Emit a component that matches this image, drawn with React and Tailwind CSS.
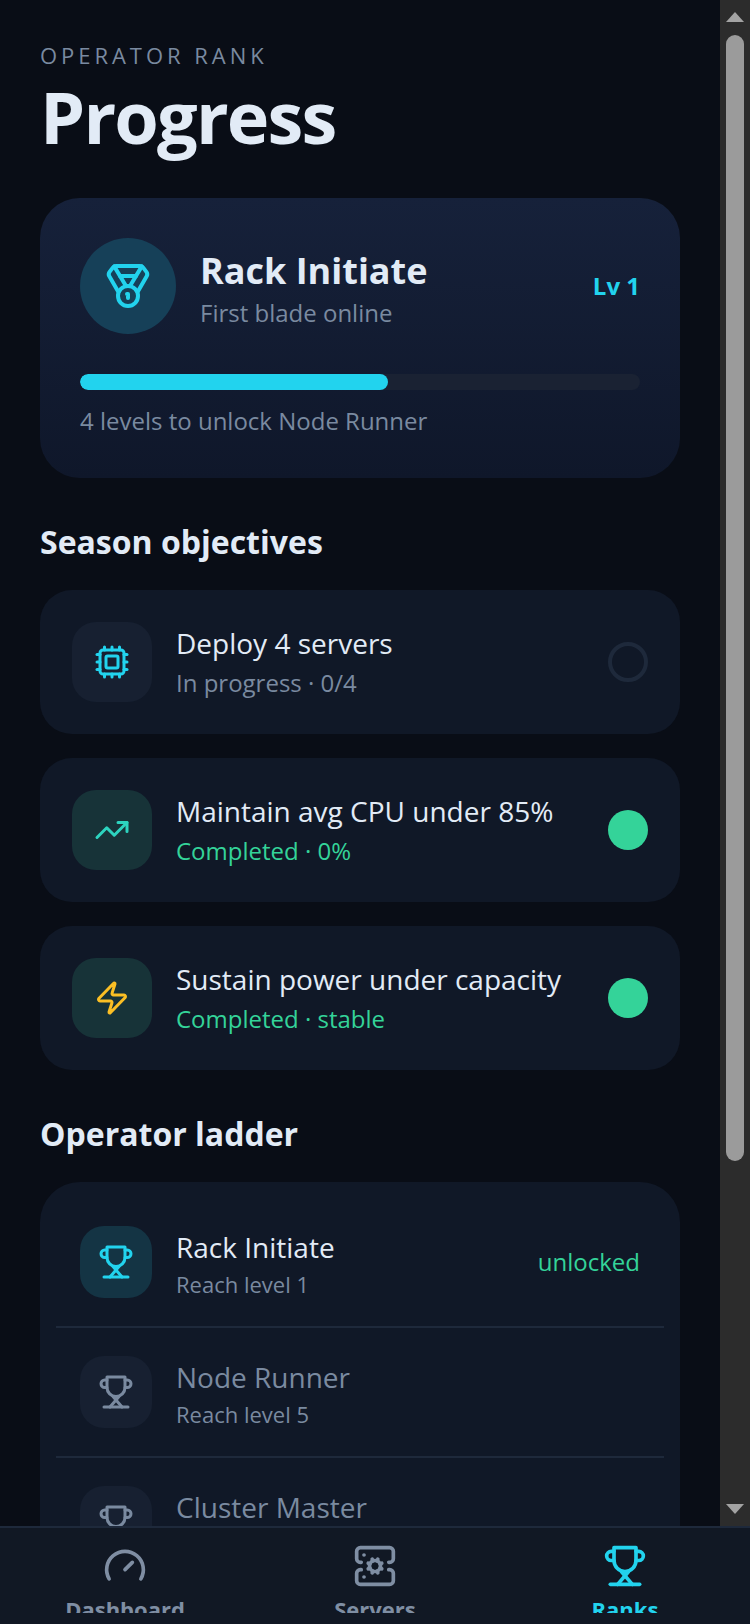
import React from "react";
import { Medal, Cpu, TrendingUp, Zap, Gauge, ServerCog } from "lucide-react";

function Trophy({ className }) {
  return (
    <svg viewBox="0 0 24 24" fill="none" stroke="currentColor" strokeWidth="2" strokeLinecap="round" strokeLinejoin="round" className={className}>
      <path d="M6 9H4.5a2.5 2.5 0 0 1 0-5H6" />
      <path d="M18 9h1.5a2.5 2.5 0 0 0 0-5H18" />
      <path d="M18 2H6v7a6 6 0 0 0 12 0V2Z" />
      <path d="M4 22h16" />
      <path d="M10 15l6 7" />
      <path d="M14 15l-6 7" />
    </svg>
  );
}

function Objective({ icon: Icon, iconColor, done, title, sub }) {
  return (
    <div className="flex h-[144px] items-center rounded-[32px] bg-[#101827] px-8">
      <div className={`flex h-[80px] w-[80px] shrink-0 items-center justify-center rounded-[24px] ${done ? "bg-[#173338]" : "bg-[#172031]"}`}>
        <Icon className={`h-[36px] w-[36px] ${iconColor}`} strokeWidth={2} />
      </div>
      <div className="ml-6 min-w-0 flex-1">
        <div className="text-[28px] leading-[40px] text-[#e2ebf6]">{title}</div>
        <div className={`mt-[2px] text-[24px] leading-[36px] ${done ? "text-[#34d399]" : "text-[#7a8aa0]"}`}>{sub}</div>
      </div>
      {done ? (
        <div className="h-[40px] w-[40px] shrink-0 rounded-full bg-[#34d399]" />
      ) : (
        <div className="h-[40px] w-[40px] shrink-0 rounded-full border-4 border-[#1e293b]" />
      )}
    </div>
  );
}

function Rung({ active, title, sub, last }) {
  return (
    <div className={`flex items-center px-6 py-7 ${last ? "" : "border-b-2 border-[#1e293b]"}`}>
      <div className={`flex h-[72px] w-[72px] shrink-0 items-center justify-center rounded-[24px] ${active ? "bg-[#143444]" : "bg-[#172031]"}`}>
        <Trophy className={`h-[36px] w-[36px] ${active ? "text-[#22d3ee]" : "text-[#7a8aa0]"}`} />
      </div>
      <div className="ml-6 h-[72px] flex-1 pt-[1px]">
        <div className={`text-[28px] leading-[40px] ${active ? "text-[#e2ebf6]" : "text-[#7a8aa0]"}`}>{title}</div>
        {sub && <div className="mt-[1px] text-[22px] leading-[32px] text-[#7a8aa0]">{sub}</div>}
      </div>
      {active && <div className="text-[24px] text-[#34d399]">unlocked</div>}
    </div>
  );
}

function NavItem({ icon: Icon, label, active }) {
  return (
    <div className={`flex w-[250px] flex-col items-center ${active ? "text-[#22d3ee]" : "text-[#7f8ea3]"}`}>
      <Icon className="h-[44px] w-[44px] shrink-0" strokeWidth={2} />
      <div className="mt-[5px] text-[22px] font-bold leading-[32px]">{label}</div>
    </div>
  );
}

export default function App() {
  return (
    <div className="flex h-[1624px] w-[750px] flex-col overflow-hidden bg-[#090d16] font-['Open_Sans',sans-serif]">
      <div className="flex min-h-0 flex-1">
        <main className="min-w-0 flex-1 overflow-hidden">
          <div className="px-10 pt-[39px]">
            <div className="text-[22px] uppercase leading-[32px] tracking-[0.18em] text-[#7a8aa0]">Operator rank</div>
            <h1 className="pt-[3px] text-[72px] font-bold leading-[84px] tracking-tight text-[#e2ebf6]">Progress</h1>

            <section className="mt-[40px] rounded-[40px] bg-gradient-to-b from-[#16213a] to-[#0f172a] px-10 pb-[39px] pt-10">
              <div className="flex items-center">
                <div className="flex h-[96px] w-[96px] shrink-0 items-center justify-center rounded-full bg-[#164058]">
                  <Medal className="h-[48px] w-[48px] text-[#22d3ee]" strokeWidth={2} />
                </div>
                <div className="ml-6 flex-1 pt-[6px]">
                  <div className="text-[36px] font-bold leading-[48px] text-[#e2ebf6]">Rack Initiate</div>
                  <div className="text-[24px] leading-[36px] text-[#7a8aa0]">First blade online</div>
                </div>
                <div className="text-[24px] font-bold text-[#22d3ee]">Lv 1</div>
              </div>
              <div className="mt-10 h-4 overflow-hidden rounded-full bg-[#1a2233]">
                <div className="h-full w-[55%] rounded-full bg-[#22d3ee]" />
              </div>
              <div className="mt-[13px] text-[24px] leading-[36px] text-[#7a8aa0]">4 levels to unlock Node Runner</div>
            </section>

            <h2 className="mt-10 text-[32px] font-bold leading-[48px] text-[#e2ebf6]">Season objectives</h2>
            <div className="mt-6 flex flex-col gap-6">
              <Objective icon={Cpu} iconColor="text-[#22d3ee]" title="Deploy 4 servers" sub="In progress · 0/4" />
              <Objective icon={TrendingUp} iconColor="text-[#2dd4bf]" done title="Maintain avg CPU under 85%" sub="Completed · 0%" />
              <Objective icon={Zap} iconColor="text-[#fbbf24]" done title="Sustain power under capacity" sub="Completed · stable" />
            </div>

            <h2 className="mt-10 text-[32px] font-bold leading-[48px] text-[#e2ebf6]">Operator ladder</h2>
            <div className="mt-6 rounded-[40px] bg-[#101827] p-4">
              <Rung active title="Rack Initiate" sub="Reach level 1" />
              <Rung title="Node Runner" sub="Reach level 5" />
              <Rung title="Cluster Master" last />
            </div>
          </div>
        </main>
        <aside className="flex w-[30px] shrink-0 flex-col items-center bg-[#2c2c2c] py-3">
          <div className="h-0 w-0 border-x-[9px] border-b-[10px] border-x-transparent border-b-[#a3a3a3]" />
          <div className="mt-[13px] h-[1126px] w-[18px] rounded-full bg-[#9b9b9b]" />
          <div className="mt-auto h-0 w-0 border-x-[9px] border-t-[10px] border-x-transparent border-t-[#a3a3a3]" />
        </aside>
      </div>
      <nav className="h-[98px] shrink-0 border-t-2 border-[#1e293b] bg-[#111824] pt-[16px]">
        <div className="flex h-[69px] overflow-hidden">
          <NavItem icon={Gauge} label="Dashboard" />
          <NavItem icon={ServerCog} label="Servers" />
          <NavItem icon={Trophy} label="Ranks" active />
        </div>
      </nav>
    </div>
  );
}
